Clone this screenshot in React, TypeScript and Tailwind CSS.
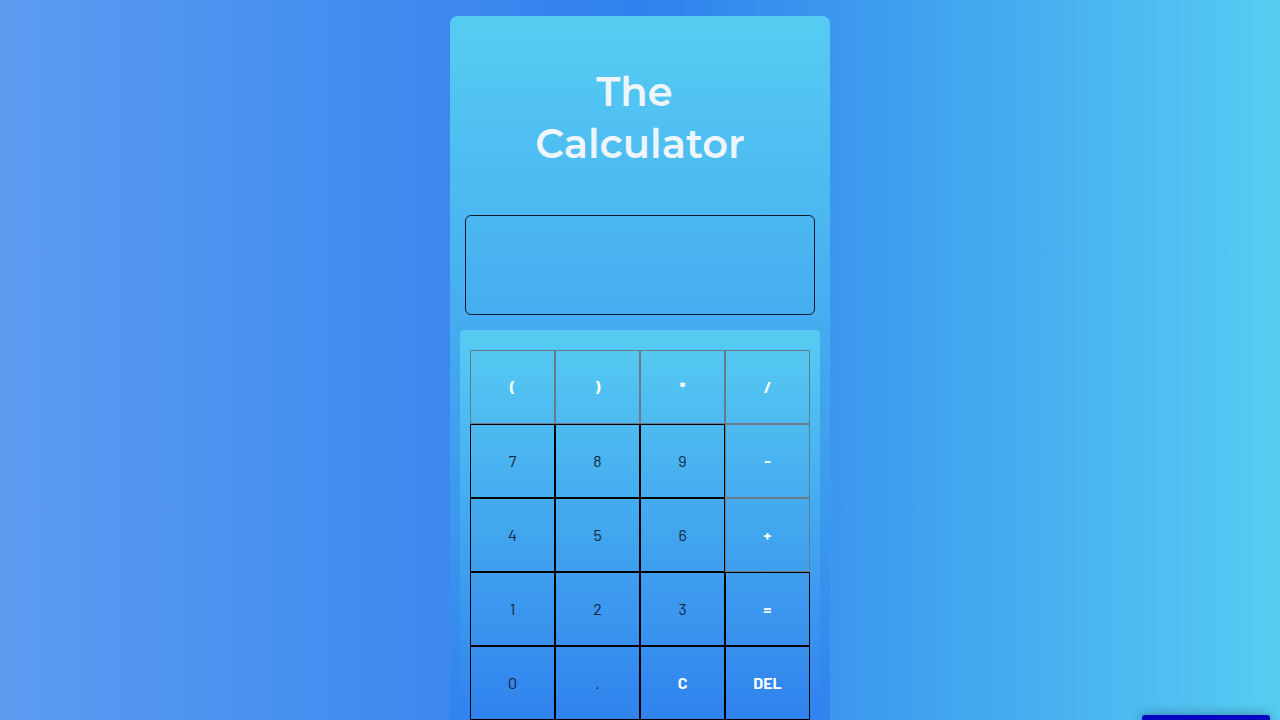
// Calculator card on a horizontal blue gradient. Layout only, no eval logic.

const OP = "text-white font-bold border-[#6b7885]";
const NUM = "text-[#15263f] font-normal border-black";
const KEY = "text-white font-bold border-black";

const KEYS: { label: string; cls: string }[] = [
  { label: "(", cls: OP },
  { label: ")", cls: OP },
  { label: "*", cls: OP },
  { label: "/", cls: OP },
  { label: "7", cls: NUM },
  { label: "8", cls: NUM },
  { label: "9", cls: NUM },
  { label: "-", cls: OP },
  { label: "4", cls: NUM },
  { label: "5", cls: NUM },
  { label: "6", cls: NUM },
  { label: "+", cls: OP },
  { label: "1", cls: NUM },
  { label: "2", cls: NUM },
  { label: "3", cls: NUM },
  { label: "=", cls: KEY },
  { label: "0", cls: NUM },
  { label: ".", cls: NUM },
  { label: "C", cls: KEY },
  { label: "DEL", cls: KEY },
];

export default function App() {
  return (
    <div className="relative h-[720px] overflow-hidden bg-[linear-gradient(to_right,#5c9cf1,#2f80ed_50%,#56ccf2)]">
      <div className="mx-auto mt-4 w-[380px] rounded-lg bg-[linear-gradient(to_bottom,#56ccf2,#2f80ed)] px-[10px] pb-[10px] h-[730px]">
        <h1
          className="pt-[50px] text-center text-[40px] leading-[52px] font-semibold text-[#eef5fb]"
          style={{ fontFamily: "Montserrat, Inter, 'Open Sans', sans-serif" }}
        >
          <span className="block pr-[11px]">The</span>
          <span className="block">Calculator</span>
        </h1>

        <div className="mx-[5px] mt-[45px] h-[100px] rounded-md border border-[#0c1b2e]" />

        <div className="mt-[15px] rounded bg-[linear-gradient(to_bottom,#56ccf2,#2f80ed)] px-[10px] pt-[20px] pb-[10px]">
          <div className="grid grid-cols-4" style={{ fontFamily: "Barlow, Roboto, sans-serif" }}>
            {KEYS.map((k) => (
              <button
                key={k.label}
                className={`flex h-[74px] items-center justify-center border text-[16px] ${k.cls}`}
              >
                {k.label}
              </button>
            ))}
          </div>
        </div>
      </div>

      <div className="absolute left-[1142px] top-[715px] h-[40px] w-[128px] rounded-[3px] bg-[#0505c2] shadow-[0_0_12px_rgba(0,0,0,0.35)]" />
    </div>
  );
}
